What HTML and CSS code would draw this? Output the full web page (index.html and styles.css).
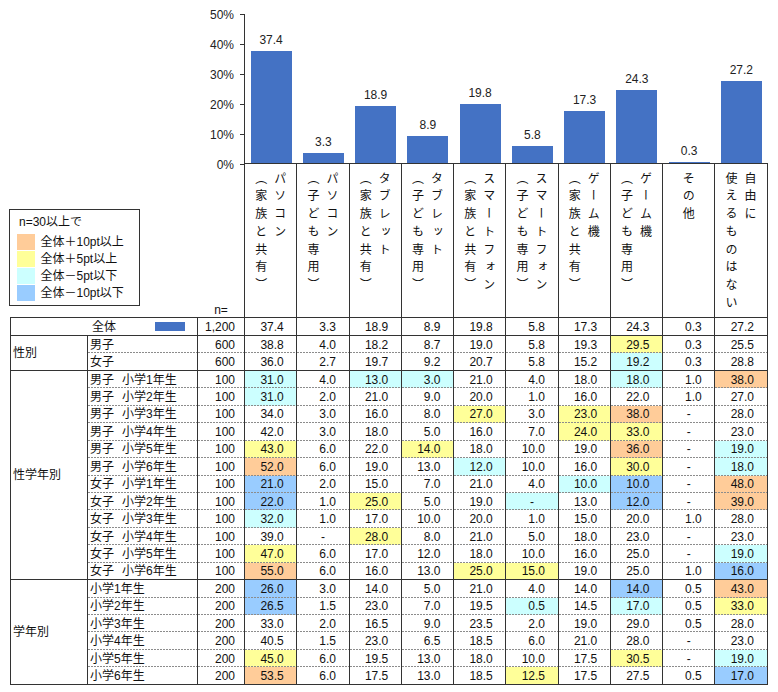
FILE: index.html
```html
<!DOCTYPE html>
<html lang="ja">
<head>
<meta charset="utf-8">
<title>利用できる機器</title>
<link rel="stylesheet" href="styles.css">
</head>
<body>
<div class="page">
  <div class="top">
    <div class="yaxis">
      <div class="yl"><span>50%</span><i class="tk"></i></div>
      <div class="yl"><span>40%</span><i class="tk"></i></div>
      <div class="yl"><span>30%</span><i class="tk"></i></div>
      <div class="yl"><span>20%</span><i class="tk"></i></div>
      <div class="yl"><span>10%</span><i class="tk"></i></div>
      <div class="yl"><span>0%</span><i class="tk"></i></div>
    </div>
    <div class="plot">
      <div class="pc"><span class="pv">37.4</span><div class="bar" style="height:112.2px"></div></div>
      <div class="pc"><span class="pv">3.3</span><div class="bar" style="height:9.9px"></div></div>
      <div class="pc"><span class="pv">18.9</span><div class="bar" style="height:56.7px"></div></div>
      <div class="pc"><span class="pv">8.9</span><div class="bar" style="height:26.7px"></div></div>
      <div class="pc"><span class="pv">19.8</span><div class="bar" style="height:59.4px"></div></div>
      <div class="pc"><span class="pv">5.8</span><div class="bar" style="height:17.4px"></div></div>
      <div class="pc"><span class="pv">17.3</span><div class="bar" style="height:51.9px"></div></div>
      <div class="pc"><span class="pv">24.3</span><div class="bar" style="height:72.9px"></div></div>
      <div class="pc"><span class="pv">0.3</span><div class="bar" style="height:1px"></div></div>
      <div class="pc"><span class="pv">27.2</span><div class="bar" style="height:81.6px"></div></div>
    </div>
    <div class="lb">
      <div class="legend">
        <div class="lt">n=30以上で</div>
        <div class="lr"><span class="ls o"></span>全体＋10pt以上</div>
        <div class="lr"><span class="ls y"></span>全体＋5pt以上</div>
        <div class="lr"><span class="ls q"></span>全体－5pt以下</div>
        <div class="lr"><span class="ls b"></span>全体－10pt以下</div>
      </div>
      <div class="nl">n=</div>
    </div>
    <div class="hdr">
      <div class="hc"><div class="vt">パソコン<br>（家族と共有）</div></div>
      <div class="hc"><div class="vt">パソコン<br>（子ども専用）</div></div>
      <div class="hc"><div class="vt">タブレット<br>（家族と共有）</div></div>
      <div class="hc"><div class="vt">タブレット<br>（子ども専用）</div></div>
      <div class="hc"><div class="vt">スマートフォン<br>（家族と共有）</div></div>
      <div class="hc"><div class="vt">スマートフォン<br>（子ども専用）</div></div>
      <div class="hc"><div class="vt">ゲーム機<br>（家族と共有）</div></div>
      <div class="hc"><div class="vt">ゲーム機<br>（子ども専用）</div></div>
      <div class="hc"><div class="vt">その他</div></div>
      <div class="hc"><div class="vt">自由に<br>使えるものはない</div></div>
    </div>
  </div>

  <div class="tbl">
    <!-- 全体 -->
    <div class="c e all"><span></span><span class="at">全体</span><span class="sw"></span></div>
    <div class="c e n">1,200</div>
    <div class="c e v">37.4</div><div class="c e v">3.3</div><div class="c e v">18.9</div><div class="c e v">8.9</div><div class="c e v">19.8</div><div class="c e v">5.8</div><div class="c e v">17.3</div><div class="c e v">24.3</div><div class="c e v">0.3</div><div class="c e v">27.2</div>

    <!-- 性別 -->
    <div class="c k r2">性別</div>
    <div class="c l">男子</div><div class="c n">600</div>
    <div class="c v">38.8</div><div class="c v">4.0</div><div class="c v">18.2</div><div class="c v">8.7</div><div class="c v">19.0</div><div class="c v">5.8</div><div class="c v">19.3</div><div class="c v y">29.5</div><div class="c v">0.3</div><div class="c v">25.5</div>
    <div class="c e l">女子</div><div class="c e n">600</div>
    <div class="c e v">36.0</div><div class="c e v">2.7</div><div class="c e v">19.7</div><div class="c e v">9.2</div><div class="c e v">20.7</div><div class="c e v">5.8</div><div class="c e v">15.2</div><div class="c e v q">19.2</div><div class="c e v">0.3</div><div class="c e v">28.8</div>

    <!-- 性学年別 -->
    <div class="c k r12">性学年別</div>
    <div class="c l">男子<span class="sp"></span>小学1年生</div><div class="c n">100</div>
    <div class="c v q">31.0</div><div class="c v">4.0</div><div class="c v q">13.0</div><div class="c v q">3.0</div><div class="c v">21.0</div><div class="c v">4.0</div><div class="c v">18.0</div><div class="c v q">18.0</div><div class="c v">1.0</div><div class="c v o">38.0</div>
    <div class="c l">男子<span class="sp"></span>小学2年生</div><div class="c n">100</div>
    <div class="c v q">31.0</div><div class="c v">2.0</div><div class="c v">21.0</div><div class="c v">9.0</div><div class="c v">20.0</div><div class="c v">1.0</div><div class="c v">16.0</div><div class="c v">22.0</div><div class="c v">1.0</div><div class="c v">27.0</div>
    <div class="c l">男子<span class="sp"></span>小学3年生</div><div class="c n">100</div>
    <div class="c v">34.0</div><div class="c v">3.0</div><div class="c v">16.0</div><div class="c v">8.0</div><div class="c v y">27.0</div><div class="c v">3.0</div><div class="c v y">23.0</div><div class="c v o">38.0</div><div class="c d">-</div><div class="c v">28.0</div>
    <div class="c l">男子<span class="sp"></span>小学4年生</div><div class="c n">100</div>
    <div class="c v">42.0</div><div class="c v">3.0</div><div class="c v">18.0</div><div class="c v">5.0</div><div class="c v">16.0</div><div class="c v">7.0</div><div class="c v y">24.0</div><div class="c v y">33.0</div><div class="c d">-</div><div class="c v">23.0</div>
    <div class="c l">男子<span class="sp"></span>小学5年生</div><div class="c n">100</div>
    <div class="c v y">43.0</div><div class="c v">6.0</div><div class="c v">22.0</div><div class="c v y">14.0</div><div class="c v">18.0</div><div class="c v">10.0</div><div class="c v">19.0</div><div class="c v o">36.0</div><div class="c d">-</div><div class="c v q">19.0</div>
    <div class="c l">男子<span class="sp"></span>小学6年生</div><div class="c n">100</div>
    <div class="c v o">52.0</div><div class="c v">6.0</div><div class="c v">19.0</div><div class="c v">13.0</div><div class="c v q">12.0</div><div class="c v">10.0</div><div class="c v">16.0</div><div class="c v y">30.0</div><div class="c d">-</div><div class="c v q">18.0</div>
    <div class="c l">女子<span class="sp"></span>小学1年生</div><div class="c n">100</div>
    <div class="c v b">21.0</div><div class="c v">2.0</div><div class="c v">15.0</div><div class="c v">7.0</div><div class="c v">21.0</div><div class="c v">4.0</div><div class="c v q">10.0</div><div class="c v b">10.0</div><div class="c d">-</div><div class="c v o">48.0</div>
    <div class="c l">女子<span class="sp"></span>小学2年生</div><div class="c n">100</div>
    <div class="c v b">22.0</div><div class="c v">1.0</div><div class="c v y">25.0</div><div class="c v">5.0</div><div class="c v">19.0</div><div class="c d q">-</div><div class="c v">13.0</div><div class="c v b">12.0</div><div class="c d">-</div><div class="c v o">39.0</div>
    <div class="c l">女子<span class="sp"></span>小学3年生</div><div class="c n">100</div>
    <div class="c v q">32.0</div><div class="c v">1.0</div><div class="c v">17.0</div><div class="c v">10.0</div><div class="c v">20.0</div><div class="c v">1.0</div><div class="c v">15.0</div><div class="c v">20.0</div><div class="c v">1.0</div><div class="c v">28.0</div>
    <div class="c l">女子<span class="sp"></span>小学4年生</div><div class="c n">100</div>
    <div class="c v">39.0</div><div class="c d">-</div><div class="c v y">28.0</div><div class="c v">8.0</div><div class="c v">21.0</div><div class="c v">5.0</div><div class="c v">18.0</div><div class="c v">23.0</div><div class="c d">-</div><div class="c v">23.0</div>
    <div class="c l">女子<span class="sp"></span>小学5年生</div><div class="c n">100</div>
    <div class="c v y">47.0</div><div class="c v">6.0</div><div class="c v">17.0</div><div class="c v">12.0</div><div class="c v">18.0</div><div class="c v">10.0</div><div class="c v">16.0</div><div class="c v">25.0</div><div class="c d">-</div><div class="c v q">19.0</div>
    <div class="c e l">女子<span class="sp"></span>小学6年生</div><div class="c e n">100</div>
    <div class="c e v o">55.0</div><div class="c e v">6.0</div><div class="c e v">16.0</div><div class="c e v">13.0</div><div class="c e v y">25.0</div><div class="c e v y">15.0</div><div class="c e v">19.0</div><div class="c e v">25.0</div><div class="c e v">1.0</div><div class="c e v b">16.0</div>

    <!-- 学年別 -->
    <div class="c k r6">学年別</div>
    <div class="c l">小学1年生</div><div class="c n">200</div>
    <div class="c v b">26.0</div><div class="c v">3.0</div><div class="c v">14.0</div><div class="c v">5.0</div><div class="c v">21.0</div><div class="c v">4.0</div><div class="c v">14.0</div><div class="c v b">14.0</div><div class="c v">0.5</div><div class="c v o">43.0</div>
    <div class="c l">小学2年生</div><div class="c n">200</div>
    <div class="c v b">26.5</div><div class="c v">1.5</div><div class="c v">23.0</div><div class="c v">7.0</div><div class="c v">19.5</div><div class="c v q">0.5</div><div class="c v">14.5</div><div class="c v q">17.0</div><div class="c v">0.5</div><div class="c v y">33.0</div>
    <div class="c l">小学3年生</div><div class="c n">200</div>
    <div class="c v">33.0</div><div class="c v">2.0</div><div class="c v">16.5</div><div class="c v">9.0</div><div class="c v">23.5</div><div class="c v">2.0</div><div class="c v">19.0</div><div class="c v">29.0</div><div class="c v">0.5</div><div class="c v">28.0</div>
    <div class="c l">小学4年生</div><div class="c n">200</div>
    <div class="c v">40.5</div><div class="c v">1.5</div><div class="c v">23.0</div><div class="c v">6.5</div><div class="c v">18.5</div><div class="c v">6.0</div><div class="c v">21.0</div><div class="c v">28.0</div><div class="c d">-</div><div class="c v">23.0</div>
    <div class="c l">小学5年生</div><div class="c n">200</div>
    <div class="c v y">45.0</div><div class="c v">6.0</div><div class="c v">19.5</div><div class="c v">13.0</div><div class="c v">18.0</div><div class="c v">10.0</div><div class="c v">17.5</div><div class="c v y">30.5</div><div class="c d">-</div><div class="c v q">19.0</div>
    <div class="c e l">小学6年生</div><div class="c e n">200</div>
    <div class="c e v o">53.5</div><div class="c e v">6.0</div><div class="c e v">17.5</div><div class="c e v">13.0</div><div class="c e v">18.5</div><div class="c e v y">12.5</div><div class="c e v">17.5</div><div class="c e v">27.5</div><div class="c e v">0.5</div><div class="c e v b">17.0</div>
  </div>
</div>
</body>
</html>
```

FILE: styles.css
```css
* { box-sizing: border-box; }

body {
  margin: 0;
  background: #fff;
  color: #111;
  font-family: "Liberation Sans", "Noto Sans CJK JP", sans-serif;
  font-size: 12px;
}

.page { width: 778px; height: 692px; overflow: hidden; }

/* ---------- chart + header ---------- */
.top {
  display: grid;
  grid-template-columns: 244px 523.5px;
  grid-template-rows: 164px 153px;
}

.yaxis {
  grid-column: 1;
  grid-row: 1;
  display: flex;
  flex-direction: column;
  justify-content: space-between;
  margin: 7.5px 0 -7.5px;
  color: #222;
}
.yl {
  display: flex;
  justify-content: flex-end;
  align-items: center;
  height: 14px;
  line-height: 14px;
}
.tk { width: 4px; height: 1px; background: #333; margin-left: 6px; }

.plot {
  grid-column: 2;
  grid-row: 1;
  margin-top: 14px;
  border-left: 1px solid #333;
  border-bottom: 1px solid #333;
  display: flex;
  align-items: flex-end;
}
.pc {
  width: 52.25px;
  flex: none;
  display: flex;
  flex-direction: column;
  align-items: center;
}
.pv { line-height: 14px; margin-bottom: 4px; color: #222; }
.bar { width: 41px; background: #4472c4; }

.lb {
  grid-column: 1;
  grid-row: 2;
  display: flex;
  align-items: flex-end;
  justify-content: space-between;
}
.legend {
  margin: 0 0 11px 9px;
  width: 131px;
  height: 97px;
  border: 1px solid #333;
  padding-top: 5px;
}
.lt { padding-left: 9px; line-height: 14px; margin-bottom: 4px; }
.lr {
  display: flex;
  align-items: center;
  height: 17px;
  padding-left: 7px;
  line-height: 14px;
}
.ls { width: 18px; height: 16px; margin-right: 5.5px; flex: none; }
.nl { width: 46px; text-align: center; line-height: 14px; }

.hdr {
  grid-column: 2;
  grid-row: 2;
  display: flex;
  border-left: 1px solid #333;
}
.hc {
  width: 52.25px;
  flex: none;
  border-right: 1px solid #333;
  display: flex;
  justify-content: center;
  padding-top: 8px;
}
.vt {
  writing-mode: vertical-rl;
  font-family: "Noto Sans CJK JP", sans-serif;
  line-height: 19px;
  letter-spacing: 5.75px;
  color: #111;
}

/* ---------- table ---------- */
.tbl {
  margin-left: 10px;
  width: 757.5px;
  display: grid;
  grid-template-columns: 77px 110px 47px repeat(10, 52.25px);
  grid-template-rows: 18px repeat(20, 17.45px);
  border-left: 1px solid #333;
  border-top: 1px solid #333;
}
.c {
  border-right: 1px solid #333;
  display: flex;
  align-items: center;
  line-height: 14px;
  white-space: nowrap;
  overflow: hidden;
  background-image: repeating-linear-gradient(90deg, #8c8c8c 0 2px, transparent 2px 3px);
  background-size: 100% 1px;
  background-position: 0 100%;
  background-repeat: no-repeat;
}
.e, .k { border-bottom: 1px solid #333; background-image: none; }
.k { padding-left: 2px; }
.r2 { grid-row: span 2; }
.r12 { grid-row: span 12; }
.r6 { grid-row: span 6; }

.all {
  grid-column: span 2;
  display: grid;
  grid-template-columns: 1fr auto 1fr;
  align-items: center;
}
.all .sw {
  justify-self: end;
  width: 30px;
  height: 9px;
  background: #4472c4;
  margin-right: 12px;
}

.l { padding-left: 2px; }
.sp { display: inline-block; width: 8px; }
.n { justify-content: flex-end; padding-right: 9px; }
.v { justify-content: flex-end; padding-right: 12.5px; }
.d { justify-content: center; }

.o { background-color: #fc9; }
.y { background-color: #ff9; }
.q { background-color: #cff; }
.b { background-color: #9cf; }
```
